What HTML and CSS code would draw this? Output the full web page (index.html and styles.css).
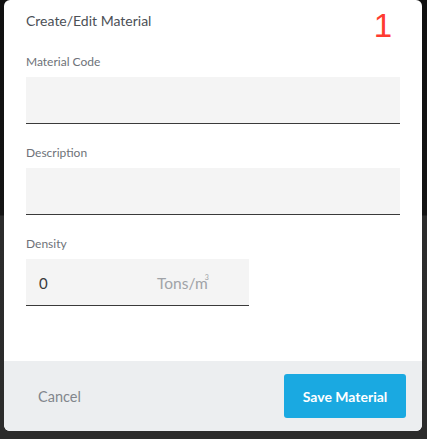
FILE: index.html
```html
<!DOCTYPE html>
<html>
<head>
<meta charset="utf-8">
<link rel="stylesheet" href="styles.css">
</head>
<body>
<div class="modal">
  <div class="modal-body">
    <div class="title">Create/Edit Material</div>
    <div class="field">
      <label class="label">Material Code</label>
      <div class="input"></div>
    </div>
    <div class="field">
      <label class="label">Description</label>
      <div class="input"></div>
    </div>
    <div class="field">
      <label class="label">Density</label>
      <div class="input input-small">
        <span class="value">0</span>
        <span class="unit">Tons/m<span class="sup">3</span></span>
      </div>
    </div>
  </div>
  <div class="modal-footer">
    <button class="btn-cancel">Cancel</button>
    <button class="btn-save">Save Material</button>
  </div>
  <div class="badge">1</div>
</div>
</body>
</html>
```
FILE: styles.css
```css
html, body {
  margin: 0;
  padding: 0;
}
body {
  width: 427px;
  height: 439px;
  background: linear-gradient(to bottom, #101010 0, #141414 215px, #2c2c2c 216px, #2b2b2b 100%);
  font-family: "Lato", "Liberation Sans", sans-serif;
  padding-left: 4px;
  box-sizing: border-box;
}
.modal {
  position: relative;
  width: 418px;
  height: 431px;
  background: #ffffff;
  border-radius: 6px;
  overflow: hidden;
  display: flex;
  flex-direction: column;
}
.modal-body {
  padding: 11px 22px 0 22px;
  flex: 1;
}
.title {
  font-size: 14px;
  line-height: 20px;
  color: #4b5056;
}
.field {
  display: flex;
  flex-direction: column;
  gap: 7px;
  margin-top: 23px;
}
.field + .field {
  margin-top: 21px;
}
.label {
  font-size: 12px;
  line-height: 16px;
  color: #6e7278;
}
.input {
  height: 46px;
  background: #f4f4f4;
  border-bottom: 1px solid #3a3a3a;
}
.input-small {
  width: 223px;
  display: flex;
  align-items: center;
  padding: 2px 0 0 13px;
  box-sizing: border-box;
  height: 47px;
}
.value {
  font-size: 15px;
  color: #3a3a3a;
  width: 118px;
}
.unit {
  font-size: 15.5px;
  color: #a0a3a7;
  position: relative;
}
.sup {
  position: absolute;
  font-size: 7px;
  right: -1px;
  top: -1px;
}
.modal-footer {
  height: 70px;
  background: #eceef0;
  display: flex;
  align-items: center;
  justify-content: space-between;
  padding: 0 16px 0 22px;
}
.btn-cancel {
  background: none;
  border: none;
  font-family: inherit;
  font-size: 14.5px;
  color: #82868c;
  padding: 0 12px;
  height: 44px;
}
.btn-save {
  width: 122px;
  height: 44px;
  background: #1aa9e1;
  border: none;
  border-radius: 3px;
  color: #ffffff;
  font-family: inherit;
  font-size: 14px;
  font-weight: bold;
}
.badge {
  position: absolute;
  top: 7px;
  right: 30px;
  font-family: "Liberation Sans", sans-serif;
  font-size: 33px;
  line-height: 38px;
  color: #ff3b30;
}
```
